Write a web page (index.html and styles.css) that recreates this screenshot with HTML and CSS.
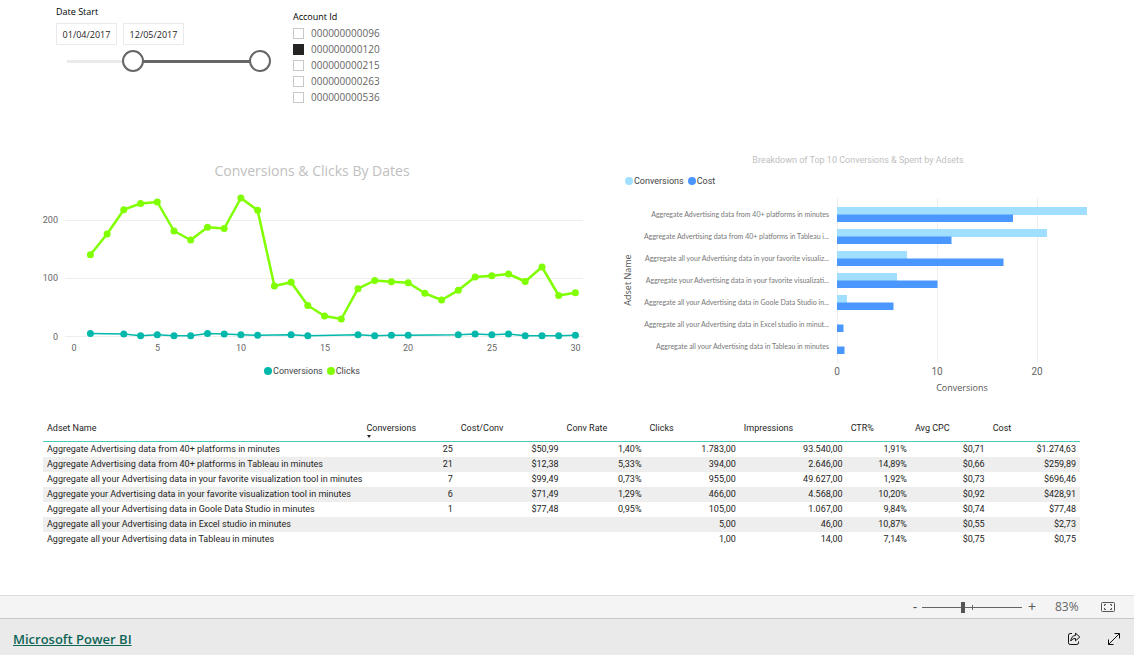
FILE: index.html
```html
<!DOCTYPE html>
<html lang="en">
<head>
<meta charset="utf-8">
<title>Conversions report</title>
<link rel="stylesheet" href="styles.css">
</head>
<body>
<main class="report">
  <section class="filters">
    <fieldset class="dates">
      <legend>Date Start</legend>
      <div class="date-fields">
        <input type="text" value="01/04/2017" aria-label="Start date">
        <input type="text" value="12/05/2017" aria-label="End date">
      </div>
      <div class="slider">
        <input class="slider-from" type="range" min="0" max="193" value="66" aria-label="Range start">
        <input class="slider-to" type="range" min="0" max="193" value="193" aria-label="Range end">
      </div>
    </fieldset>
    <fieldset class="accounts">
      <legend>Account Id</legend>
      <label><input type="checkbox">000000000096</label>
      <label><input type="checkbox" checked>000000000120</label>
      <label><input type="checkbox">000000000215</label>
      <label><input type="checkbox">000000000263</label>
      <label><input type="checkbox">000000000536</label>
    </fieldset>
  </section>

  <section class="charts">
    <div class="chart line-chart">
      <h2>Conversions &amp; Clicks By Dates</h2>
      <svg viewBox="0 182 600 176" role="img" aria-label="Conversions and clicks by day">
        <defs>
          <marker id="dot-clicks" class="dot-clicks" markerUnits="userSpaceOnUse" markerWidth="8" markerHeight="8" refX="4" refY="4"><circle cx="4" cy="4" r="3.5"/></marker>
          <marker id="dot-conv" class="dot-conv" markerUnits="userSpaceOnUse" markerWidth="8" markerHeight="8" refX="4" refY="4"><circle cx="4" cy="4" r="3.5"/></marker>
        </defs>
        <path class="grid" d="M65 220.500H583M65 278.500H583M65 336.500H583"/>
        <g class="axis end">
          <text x="58" y="223">200</text><text x="58" y="281">100</text><text x="58" y="340">0</text>
        </g>
        <g class="axis middle">
          <text x="74" y="351">0</text><text x="157.500" y="351">5</text><text x="241" y="351">10</text><text x="325" y="351">15</text><text x="408" y="351">20</text><text x="492" y="351">25</text><text x="575.500" y="351">30</text>
        </g>
        <polyline class="series clicks" points="90.4,254.7 107.1,234 123.800,209.7 140.6,203.5 157.3,202 174,231 190.7,240 207.5,227.3 224.2,228.5 240.9,198 257.6,210.3 274.4,286 291.1,282.3 307.8,305.5 324.5,316 341.3,319 358,288.7 374.7,280.5 391.4,281.7 408.2,282.7 424.9,293.3 441.6,300 458.3,290.3 475.1,277 491.8,275.7 508.5,274 525.2,281.5 542,267 558.7,295.5 575.4,292.7"/>
        <polyline class="series conv" points="90.4,333.5 123.8,334 140.6,335.7 157.3,334.7 174,335.7 190.7,335.7 207.5,333.5 224.2,334 240.9,334.7 257.6,335.2 291.1,334.7 307.8,335.7 358,334.7 374.7,335.7 391.4,335.2 408.2,335.2 458.3,334.7 475.1,334 491.8,334.7 508.5,334 525.2,335.7 542,335.7 558.7,335.7 575.4,335.2"/>
      </svg>
      <ul class="legend">
        <li class="key-conv">Conversions</li>
        <li class="key-clicks">Clicks</li>
      </ul>
    </div>

    <div class="chart bar-chart">
      <h2>Breakdown of Top 10 Conversions &amp; Spent by Adsets</h2>
      <ul class="legend">
        <li class="key-light">Conversions</li>
        <li class="key-cost">Cost</li>
      </ul>
      <svg viewBox="600 192 534 204" role="img" aria-label="Conversions and cost by adset">
        <path class="grid" d="M837.500 198V363M937.500 198V363M1037.500 198V363"/>
        <g class="bars-light">
          <path d="M837 207h250v8h-250zM837 229h210v8h-210zM837 251h70v8h-70zM837 273h60v8h-60zM837 295h10v8h-10z"/>
        </g>
        <g class="bars-cost">
          <path d="M837 214.500h176v7.500h-176zM837 236.500h114.500v7.500h-114.500zM837 258.500h166.500v7.500h-166.500zM837 280.500h100.500v7.500h-100.500zM837 302.500h56.500v7.500h-56.500zM837 324.500h6.500v7.500h-6.500zM837 346.500h7.500v7.500h-7.500z"/>
        </g>
        <g class="adset end">
          <text x="829" y="217">Aggregate Advertising data from 40+ platforms in minutes</text>
          <text x="829" y="239">Aggregate Advertising data from 40+ platforms in Tableau i...</text>
          <text x="829" y="261">Aggregate all your Advertising data in your favorite visualiz...</text>
          <text x="829" y="283">Aggregate your Advertising data in your favorite visualizati...</text>
          <text x="829" y="305">Aggregate all your Advertising data in Goole Data Studio in...</text>
          <text x="829" y="327">Aggregate all your Advertising data in Excel studio in minut...</text>
          <text x="829" y="349">Aggregate all your Advertising data in Tableau in minutes</text>
        </g>
        <g class="axis middle">
          <text x="837" y="375">0</text><text x="937" y="375">10</text><text x="1037" y="375">20</text>
        </g>
        <g class="axis-title middle">
          <text x="962" y="391">Conversions</text>
          <text transform="translate(631 280) rotate(-90)">Adset Name</text>
        </g>
      </svg>
    </div>
  </section>

  <table class="adsets">
    <colgroup>
      <col class="c-name"><col class="c-conv"><col class="c-costconv"><col class="c-rate"><col class="c-clicks"><col class="c-impr"><col class="c-ctr"><col class="c-cpc"><col class="c-cost">
    </colgroup>
    <thead>
      <tr><th>Adset Name</th><th class="sorted" aria-sort="descending">Conversions</th><th>Cost/Conv</th><th>Conv Rate</th><th>Clicks</th><th>Impressions</th><th>CTR%</th><th>Avg CPC</th><th>Cost</th></tr>
    </thead>
    <tbody>
      <tr><td>Aggregate Advertising data from 40+ platforms in minutes</td><td>25</td><td>$50,99</td><td>1,40%</td><td>1.783,00</td><td>93.540,00</td><td>1,91%</td><td>$0,71</td><td>$1.274,63</td></tr>
      <tr><td>Aggregate Advertising data from 40+ platforms in Tableau in minutes</td><td>21</td><td>$12,38</td><td>5,33%</td><td>394,00</td><td>2.646,00</td><td>14,89%</td><td>$0,66</td><td>$259,89</td></tr>
      <tr><td>Aggregate all your Advertising data in your favorite visualization tool in minutes</td><td>7</td><td>$99,49</td><td>0,73%</td><td>955,00</td><td>49.627,00</td><td>1,92%</td><td>$0,73</td><td>$696,46</td></tr>
      <tr><td>Aggregate your Advertising data in your favorite visualization tool in minutes</td><td>6</td><td>$71,49</td><td>1,29%</td><td>466,00</td><td>4.568,00</td><td>10,20%</td><td>$0,92</td><td>$428,91</td></tr>
      <tr><td>Aggregate all your Advertising data in Goole Data Studio in minutes</td><td>1</td><td>$77,48</td><td>0,95%</td><td>105,00</td><td>1.067,00</td><td>9,84%</td><td>$0,74</td><td>$77,48</td></tr>
      <tr><td>Aggregate all your Advertising data in Excel studio in minutes</td><td></td><td></td><td></td><td>5,00</td><td>46,00</td><td>10,87%</td><td>$0,55</td><td>$2,73</td></tr>
      <tr><td>Aggregate all your Advertising data in Tableau in minutes</td><td></td><td></td><td></td><td>1,00</td><td>14,00</td><td>7,14%</td><td>$0,75</td><td>$0,75</td></tr>
    </tbody>
  </table>
</main>

<div class="zoom-bar">
  <button type="button" class="step" aria-label="Zoom out">-</button>
  <input class="zoom" type="range" min="0" max="100" value="41" aria-label="Zoom">
  <button type="button" class="step" aria-label="Zoom in">+</button>
  <output class="percent">83%</output>
  <button type="button" class="fit" aria-label="Fit to page">
    <svg width="14" height="10" viewBox="0 0 14 10"><rect x=".5" y=".5" width="13" height="9" rx="1"/><path d="M5 2.500H3.500V4M3.500 6v1.500H5M9 2.500h1.500V4M10.500 6v1.500H9"/></svg>
  </button>
</div>

<footer class="footer">
  <a href="#">Microsoft Power BI</a>
  <div class="actions">
    <button type="button" aria-label="Share">
      <svg width="14" height="14" viewBox="0 0 14 14"><path d="M5 1.500H3.200A1.700 1.700 0 0 0 1.500 3.200v7.600a1.700 1.700 0 0 0 1.700 1.700h6.600a1.700 1.700 0 0 0 1.700-1.700V9.500"/><path d="M8.500 1.200 12.800 5 8.500 8.800V6.500C6.500 6.500 5 7.200 3.800 9c.2-3 1.700-5.300 4.700-5.600z"/></svg>
    </button>
    <button type="button" aria-label="Full screen">
      <svg width="14" height="14" viewBox="0 0 14 14"><path d="M1.500 12.500l11-11M7.500 1.500h5v5M1.500 7.500v5h5"/></svg>
    </button>
  </div>
</footer>
</body>
</html>
```
FILE: styles.css
```css
* { box-sizing: border-box; }

body {
  margin: 0;
  min-height: 100vh;
  display: flex;
  flex-direction: column;
  background: #fff;
  color: #252423;
  font: 9px/16px "Open Sans", "Noto Sans", sans-serif;
}

button {
  padding: 0;
  border: 0;
  background: none;
  color: inherit;
  font: inherit;
}

.report { flex: 1; }

/* Filters */
.filters {
  display: flex;
  align-items: flex-start;
  gap: 22px;
  padding: 4px 56px 0;
  height: 150px;
}

fieldset {
  margin: 0;
  padding: 0;
  border: 0;
}

legend { padding: 0; color: #000; }

.date-fields {
  display: flex;
  gap: 6px;
  margin-top: 3px;
}

.date-fields input {
  width: 61px;
  height: 22px;
  padding: 0;
  border: 1px solid #eaeaea;
  background: #fff;
  color: #252423;
  font: inherit;
  text-align: center;
}

.slider {
  position: relative;
  width: 215px;
  height: 22px;
  margin-top: 5px;
  background:
    linear-gradient(#666, #666) right 11px center / 127px 3px no-repeat,
    linear-gradient(#eaeaea, #eaeaea) 11px center / 66px 3px no-repeat;
}

.slider input {
  position: absolute;
  inset: 0;
  width: 100%;
  height: 22px;
  margin: 0;
  appearance: none;
  background: none;
  pointer-events: none;
}

.slider input::-webkit-slider-thumb {
  appearance: none;
  width: 22px;
  height: 22px;
  border: 2px solid #666;
  border-radius: 50%;
  background: #fff;
  pointer-events: auto;
}

.accounts { margin-top: 5px; }

.accounts label {
  display: flex;
  align-items: center;
  gap: 7px;
  height: 16px;
  color: #666;
  font-size: 10px;
}

.accounts input {
  width: 11px;
  height: 11px;
  margin: 0;
  appearance: none;
  border: 1px solid #c8c8c8;
}

.accounts input:checked {
  border-color: #252423;
  background: #252423;
}

/* Charts */
.charts {
  display: grid;
  grid-template-columns: 600fr 534fr;
}

.chart svg {
  display: block;
  width: 100%;
}

.chart h2 {
  margin: 0;
  color: #c0c0c0;
  font-weight: 400;
  text-align: center;
}

.line-chart h2 {
  padding: 10px 0 0 24px;
  font-size: 14px;
  line-height: 22px;
}

.bar-chart h2 {
  padding-right: 18px;
  font-family: Roboto, "Open Sans", sans-serif;
  font-size: 9px;
  line-height: 20px;
}

.legend {
  display: flex;
  gap: 4px;
  margin: 0;
  padding: 0;
  list-style: none;
  color: #444;
  font-family: Roboto, "Open Sans", sans-serif;
}

.legend li {
  display: flex;
  align-items: center;
  gap: 1px;
}

.legend li::before {
  content: "";
  width: 8px;
  height: 8px;
  border-radius: 50%;
  background: currentColor;
}

.line-chart .legend {
  justify-content: center;
  padding: 5px 0 0 24px;
}

.bar-chart .legend { padding: 3px 0 3px 25px; }

.legend .key-conv::before { background: #01b8aa; }
.legend .key-clicks::before { background: #80ff00; }
.legend .key-light::before { background: #a0dfff; }
.legend .key-cost::before { background: #4a97ff; }

.grid { fill: none; stroke: #eee; }
.end { text-anchor: end; }
.middle { text-anchor: middle; }

.axis {
  fill: #666;
  font-family: Roboto, "Open Sans", sans-serif;
  font-size: 9px;
}

.bar-chart .axis { font-size: 10px; }
.axis-title { fill: #555; font-size: 9px; }

.adset {
  fill: #777;
  font-family: Lato, "Open Sans", sans-serif;
  font-size: 7px;
}

.series { fill: none; stroke-linejoin: round; }

.clicks {
  stroke: #80ff00;
  stroke-width: 2.5;
  marker: url(#dot-clicks);
}

.conv {
  stroke: #01b8aa;
  stroke-width: 1.5;
  marker: url(#dot-conv);
}

.dot-clicks { fill: #80ff00; }
.dot-conv { fill: #01b8aa; }
.bars-light { fill: #a0dfff; }
.bars-cost { fill: #4a97ff; }

/* Table */
.adsets {
  width: calc(100% - 97px);
  margin: 24px 54px 0 43px;
  border-collapse: collapse;
  table-layout: fixed;
  font-family: Roboto, "Open Sans", sans-serif;
  font-size: 9px;
  line-height: 15px;
}

.c-name { width: 30.8%; }
.c-conv { width: 9.1%; }
.c-costconv { width: 10.2%; }
.c-rate { width: 8%; }
.c-clicks { width: 9.1%; }
.c-impr { width: 10.3%; }
.c-ctr { width: 6.2%; }
.c-cpc { width: 7.5%; }
.c-cost { width: 8.8%; }

.adsets th {
  position: relative;
  height: 21px;
  padding: 0 4px 3px;
  border-bottom: 1px solid #4accc0;
  font-weight: 400;
  text-align: left;
  white-space: nowrap;
}

.sorted::after {
  content: "";
  position: absolute;
  left: 5px;
  bottom: 3px;
  border: 2px solid transparent;
  border-top: 3px solid #252423;
  border-bottom: 0;
}

.adsets td {
  height: 15px;
  padding: 0 4px;
  text-align: right;
  white-space: nowrap;
}

.adsets td:first-child { text-align: left; }
.adsets tbody tr:nth-child(even) { background: #eee; }

/* Bottom bars */
.zoom-bar {
  display: flex;
  align-items: center;
  justify-content: flex-end;
  height: 24px;
  padding-right: 19px;
  border-top: 1px solid #ddd;
  border-bottom: 1px solid #c6c6c6;
  background: #f4f4f4;
  color: #666;
  font-size: 12px;
}

.step {
  width: 14px;
  color: #555;
  font-size: 14px;
}

.zoom {
  width: 100px;
  height: 12px;
  margin: 0 3px 0 0;
  appearance: none;
  background:
    linear-gradient(#666, #666) 50px center / 1px 5px no-repeat,
    linear-gradient(#666, #666) center / 100% 1px no-repeat;
}

.zoom::-webkit-slider-thumb {
  appearance: none;
  width: 4px;
  height: 11px;
  background: #555;
}

.percent {
  width: 46px;
  padding-left: 16px;
  font-size: 12px;
}

.fit {
  display: flex;
  margin-left: 16px;
}

.fit svg { fill: none; stroke: #555; }

.footer {
  display: flex;
  align-items: center;
  justify-content: space-between;
  height: 36px;
  padding: 4px 13px 0;
  background: #eaeaea;
}

.footer a {
  color: #0f6657;
  font-size: 13px;
  font-weight: 600;
  line-height: 20px;
}

.actions {
  display: flex;
  gap: 26px;
}

.actions button { display: flex; }

.actions svg {
  fill: none;
  stroke: #111;
}
```
